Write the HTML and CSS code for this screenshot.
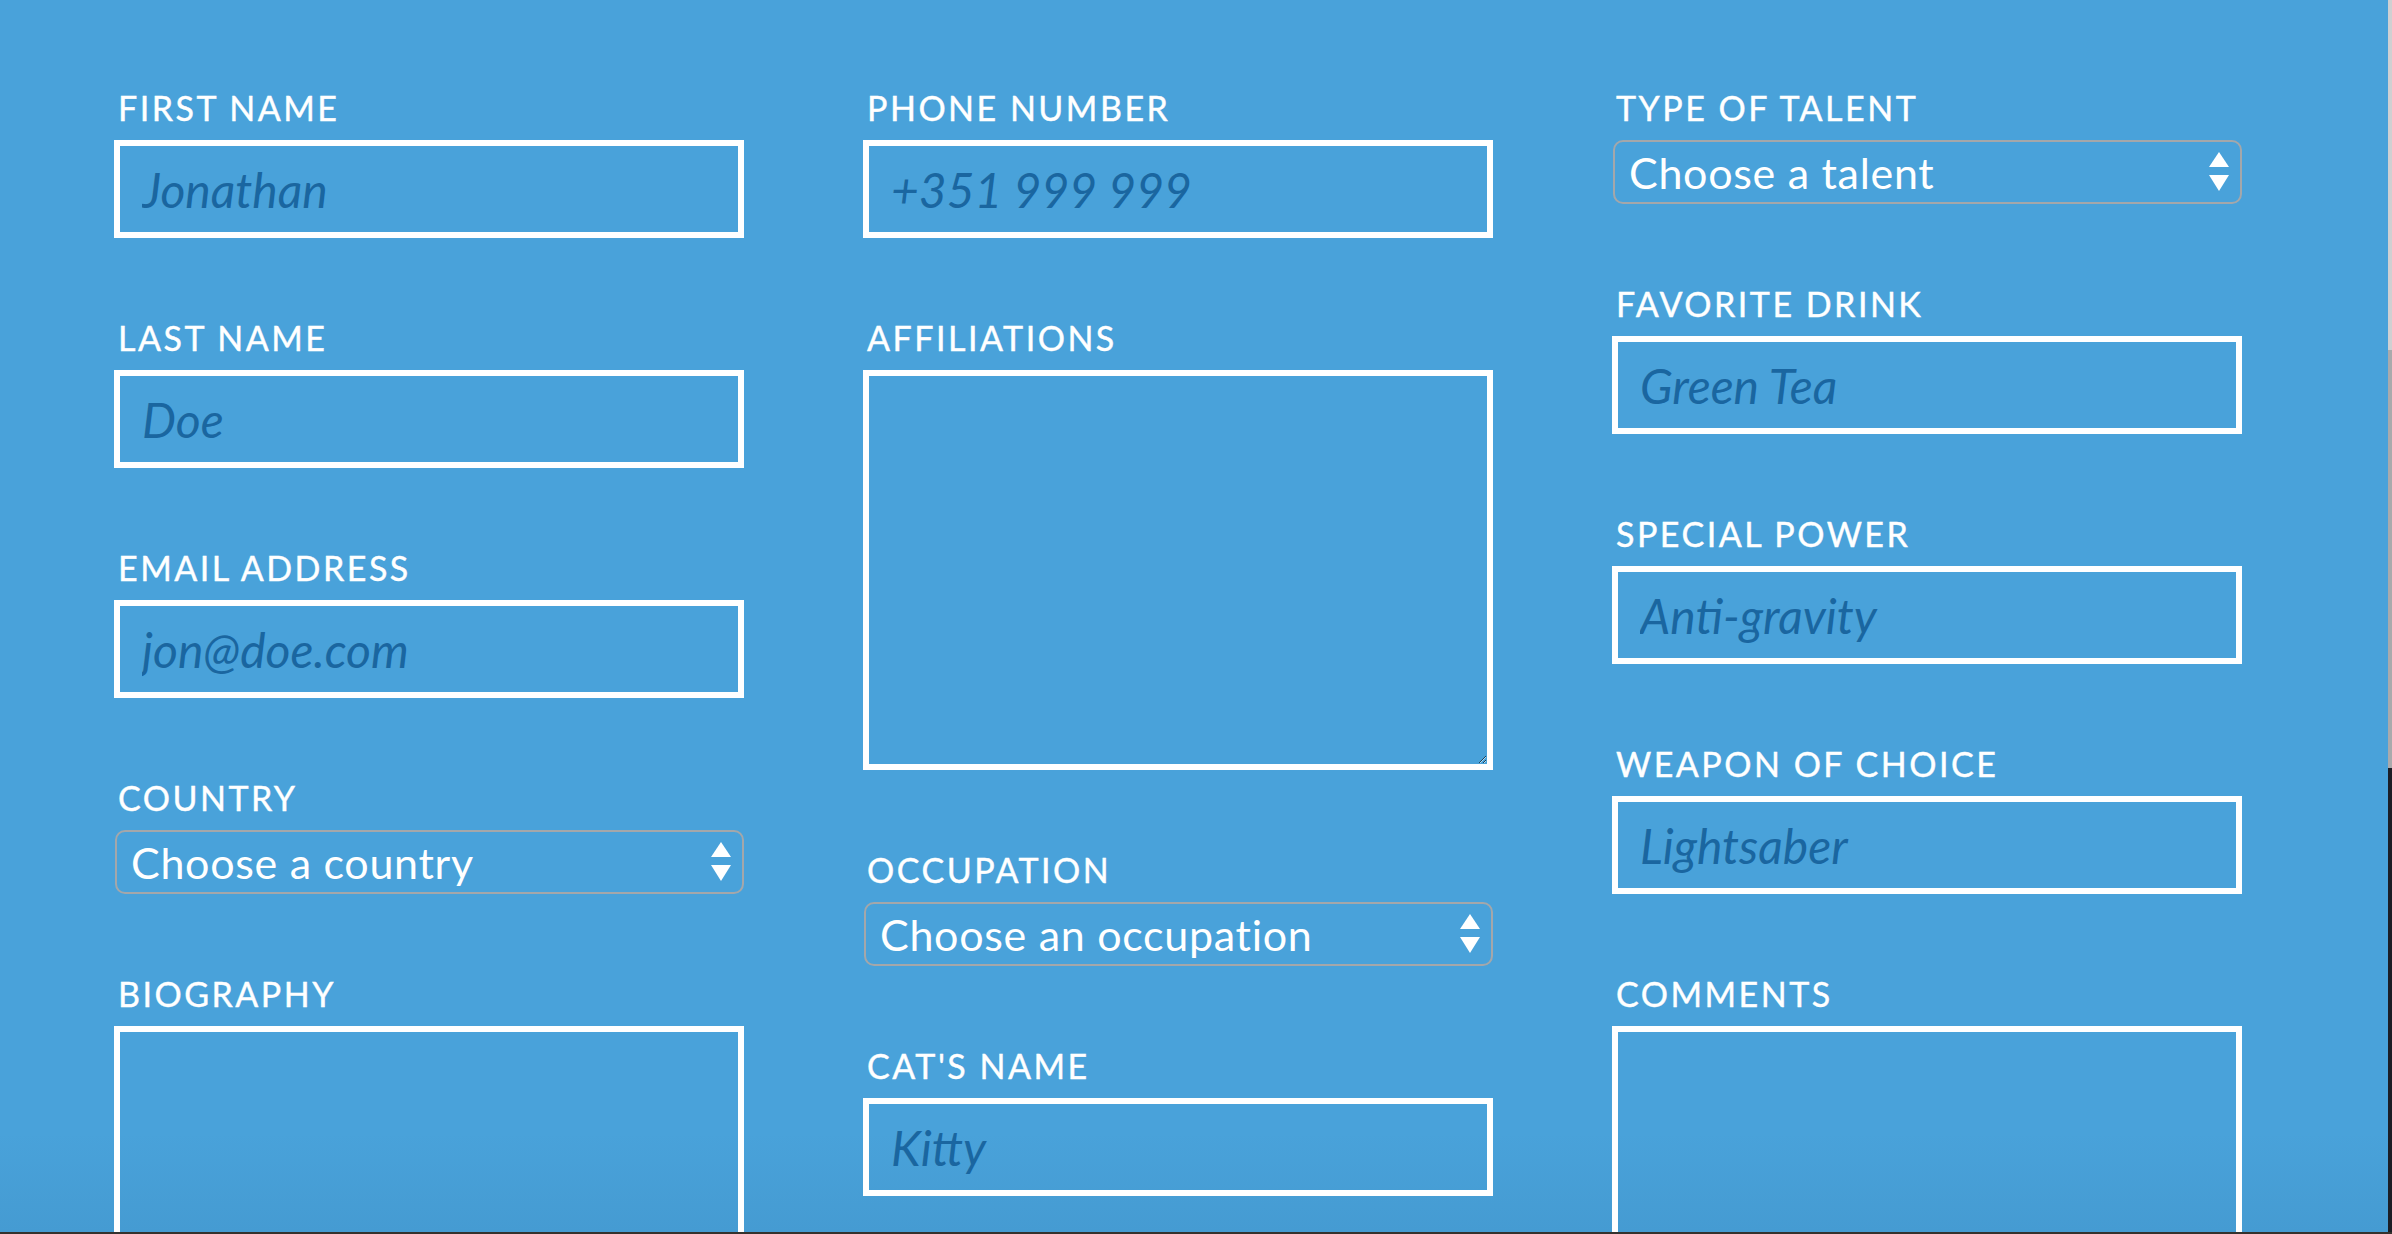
FILE: index.html
```html
<!DOCTYPE html>
<html lang="en">
<head>
<meta charset="utf-8">
<title>Form</title>
<link rel="stylesheet" href="styles.css">
</head>
<body>
<div class="page">
  <main class="form">
    <div class="col">
      <div class="field"><label class="label">First name</label><input class="text" type="text" placeholder="Jonathan"></div>
      <div class="field"><label class="label">Last name</label><input class="text" type="text" placeholder="Doe"></div>
      <div class="field"><label class="label">Email address</label><input class="text" type="text" placeholder="jon@doe.com"></div>
      <div class="field"><label class="label">Country</label>
        <div class="select-wrap"><select class="select"><option>Choose a country</option></select>
          <svg class="arrows" width="20" height="39" viewBox="0 0 20 39"><path d="M10 0 L20 15 L0 15 Z" fill="#fff"/><path d="M0 23 L20 23 L10 39 Z" fill="#fff"/></svg></div>
      </div>
      <div class="field"><label class="label">Biography</label><textarea class="area"></textarea></div>
    </div>
    <div class="col">
      <div class="field"><label class="label">Phone number</label><input class="text" type="text" placeholder="+351 999 999"></div>
      <div class="field"><label class="label">Affiliations</label><textarea class="area"></textarea></div>
      <div class="field"><label class="label">Occupation</label>
        <div class="select-wrap"><select class="select"><option>Choose an occupation</option></select>
          <svg class="arrows" width="20" height="39" viewBox="0 0 20 39"><path d="M10 0 L20 15 L0 15 Z" fill="#fff"/><path d="M0 23 L20 23 L10 39 Z" fill="#fff"/></svg></div>
      </div>
      <div class="field"><label class="label">Cat's name</label><input class="text" type="text" placeholder="Kitty"></div>
    </div>
    <div class="col">
      <div class="field"><label class="label">Type of talent</label>
        <div class="select-wrap"><select class="select"><option>Choose a talent</option></select>
          <svg class="arrows" width="20" height="39" viewBox="0 0 20 39"><path d="M10 0 L20 15 L0 15 Z" fill="#fff"/><path d="M0 23 L20 23 L10 39 Z" fill="#fff"/></svg></div>
      </div>
      <div class="field"><label class="label">Favorite drink</label><input class="text" type="text" placeholder="Green Tea"></div>
      <div class="field"><label class="label">Special power</label><input class="text" type="text" placeholder="Anti-gravity"></div>
      <div class="field"><label class="label">Weapon of choice</label><input class="text" type="text" placeholder="Lightsaber"></div>
      <div class="field"><label class="label">Comments</label><textarea class="area"></textarea></div>
    </div>
  </main>
  <div class="edge"><span class="edge-top"></span><span class="edge-mid"></span><span class="edge-bot"></span></div>
</div>
<div class="bottom-line"></div>
</body>
</html>
```

FILE: styles.css
```css
html, body {
  margin: 0;
  padding: 0;
}
body {
  width: 2392px;
  height: 1234px;
  overflow: hidden;
  background: #49a2da;
  font-family: Lato, "Liberation Sans", sans-serif;
  display: flex;
  flex-direction: column;
}
.page {
  flex: 1;
  display: flex;
  min-height: 0;
  overflow: hidden;
}
.form {
  flex: 1;
  display: grid;
  grid-template-columns: repeat(3, 630px);
  column-gap: 119px;
  align-items: start;
  padding: 88px 0 0 114px;
  background: linear-gradient(to bottom, #49a2da 0%, #49a2da 92%, #459bd2 100%);
}
.col {
  display: flex;
  flex-direction: column;
}
.field {
  display: flex;
  flex-direction: column;
  margin-bottom: 80px;
}
.label {
  display: block;
  font-size: 34px;
  line-height: 40px;
  font-weight: 400;
  text-transform: uppercase;
  letter-spacing: 2.5px;
  color: #fff;
  margin: 0 0 12px 4px;
  -webkit-text-stroke: 0.4px #fff;
}
.text, .area {
  box-sizing: border-box;
  width: 630px;
  border: 6px solid #fff;
  background: transparent;
  color: #fff;
  font-family: Lato, "Liberation Sans", sans-serif;
  font-style: italic;
  font-size: 48px;
  outline: none;
  margin: 0;
  border-radius: 0;
}
.text {
  height: 98px;
  padding: 0 18px 0 22px;
}
.text::placeholder {
  color: #1a66a0;
  opacity: 1;
}
.area {
  height: 400px;
  padding: 12px 18px;
  display: block;
}
.select-wrap {
  position: relative;
  width: 629px;
  margin-left: 1px;
}
.select {
  -webkit-appearance: none;
  appearance: none;
  box-sizing: border-box;
  width: 100%;
  height: 64px;
  border: 2px solid #a4a7aa;
  border-radius: 10px;
  background: transparent;
  color: #fff;
  font-family: Lato, "Liberation Sans", sans-serif;
  font-size: 43px;
  letter-spacing: 0.7px;
  padding: 0 14px;
  outline: none;
  margin: 0;
}
.arrows {
  position: absolute;
  right: 13px;
  top: 12px;
  pointer-events: none;
}
.edge {
  width: 4px;
  display: flex;
  flex-direction: column;
}
.edge-top {
  height: 350px;
  background: #cfd0d2;
}
.edge-mid {
  height: 418px;
  background: #a9aaac;
}
.edge-bot {
  flex: 1;
  background: #1b1e25;
}
.bottom-line {
  height: 2px;
  background: #35322e;
}
```
